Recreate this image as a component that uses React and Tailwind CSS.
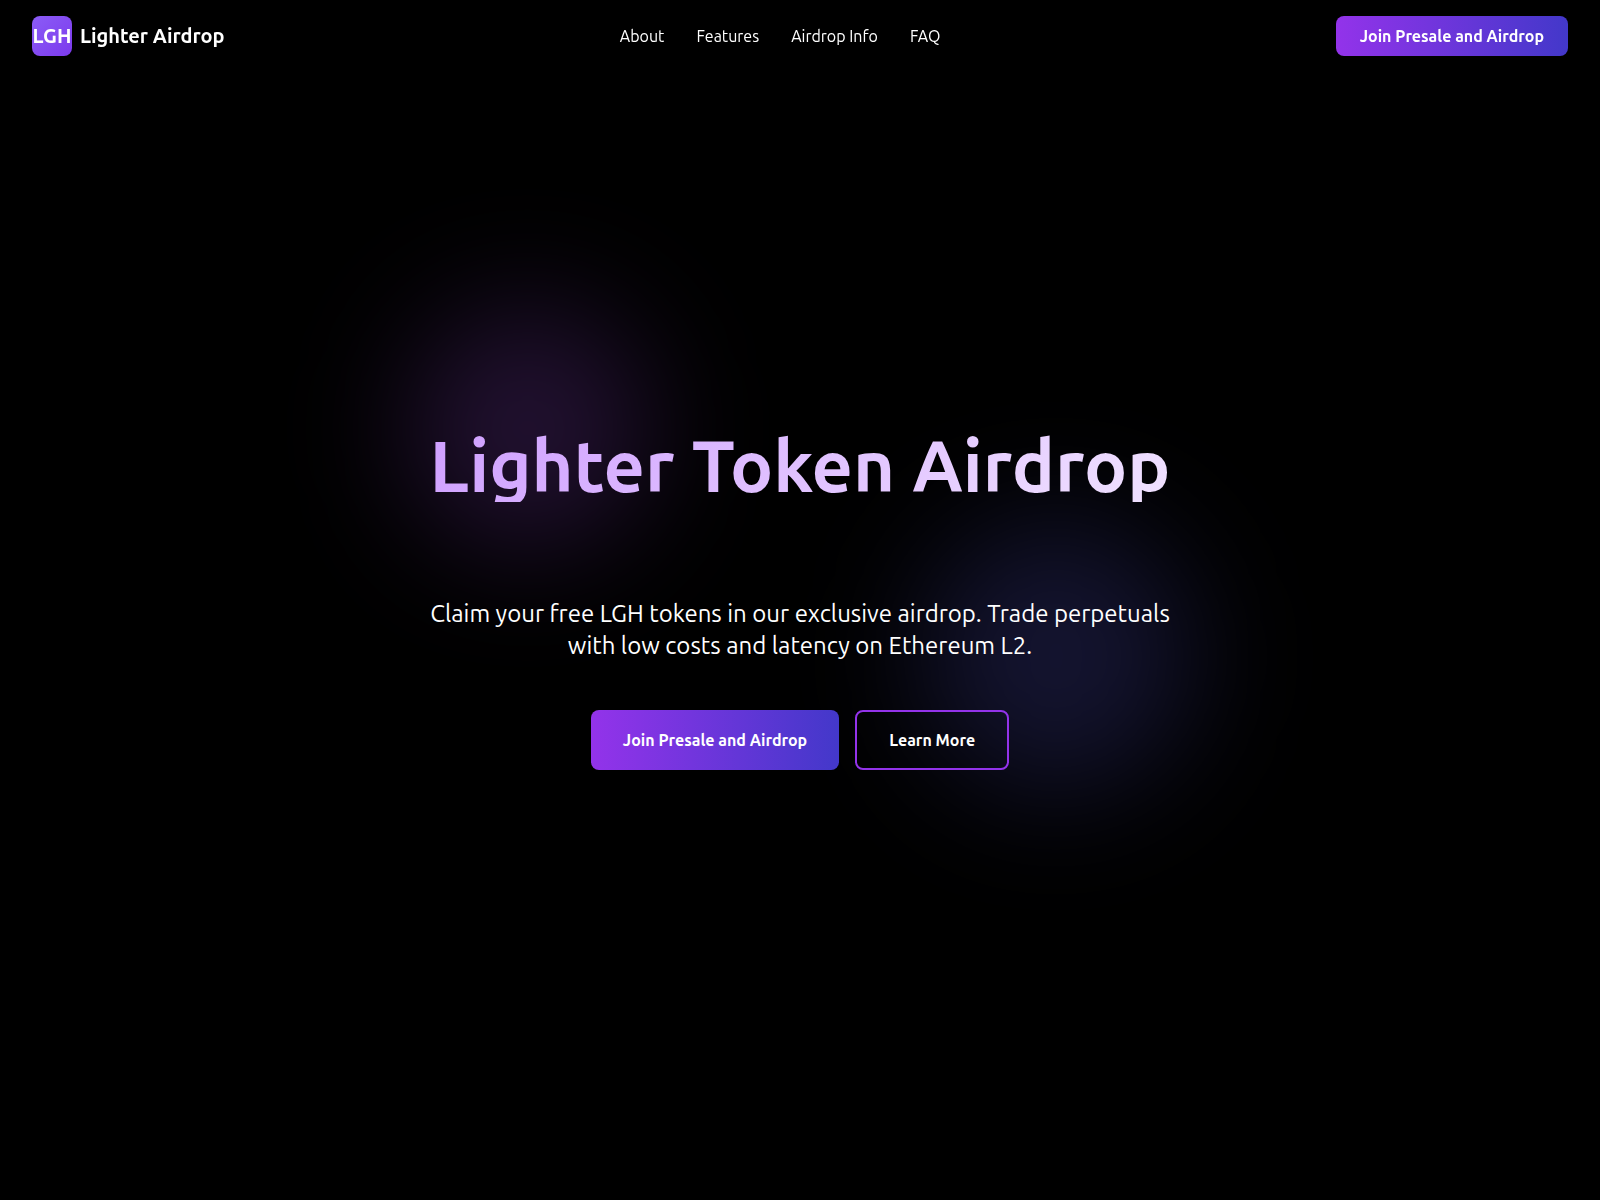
const navLinks = [
  { label: "About", href: "#about" },
  { label: "Features", href: "#features" },
  { label: "Airdrop Info", href: "#airdrop-info" },
  { label: "FAQ", href: "#faq" },
];

function Header() {
  return (
    <header className="fixed inset-x-0 top-0 z-10 flex items-center justify-between px-8 py-4">
      <a href="#top" className="flex items-center gap-2 text-xl font-bold">
        <span className="flex h-10 w-10 items-center justify-center rounded-lg bg-linear-135/srgb from-[#8b5cf6] to-[#7c3aed]">
          LGH
        </span>
        <span>Lighter Airdrop</span>
      </a>

      <nav className="flex items-center gap-8">
        {navLinks.map((link) => (
          <a key={link.href} href={link.href} className="hover:text-[#d8b4fe]">
            {link.label}
          </a>
        ))}
      </nav>

      <button
        type="button"
        className="rounded-lg bg-linear-to-r/srgb from-[#9333ea] to-[#4338ca] px-6 py-2 font-semibold"
      >
        Join Presale and Airdrop
      </button>
    </header>
  );
}

function Hero() {
  return (
    <section
      id="top"
      className="relative flex min-h-screen flex-col items-center justify-center overflow-hidden px-4 text-center"
    >
      {/* background glows */}
      <div className="absolute top-1/4 left-1/4 h-64 w-64 scale-95 rounded-full bg-[#a855f7]/20 blur-3xl" />
      <div className="absolute right-1/4 bottom-1/3 h-72 w-72 scale-95 rounded-full bg-[#6366f1]/20 blur-3xl" />

      <div className="relative flex flex-col items-center">
        <h1 className="bg-linear-135/srgb from-[#cf9fff] to-[#f0e2ff] bg-clip-text text-7xl leading-none font-bold text-transparent">
          Lighter Token Airdrop
        </h1>
        <p className="mt-24 max-w-3xl text-2xl">
          Claim your free LGH tokens in our exclusive airdrop. Trade perpetuals with low costs and latency on Ethereum L2.
        </p>
        <div className="mt-12 flex gap-4 font-semibold">
          <button
            type="button"
            className="rounded-lg bg-linear-to-r/srgb from-[#9333ea] to-[#4338ca] px-8 py-4"
          >
            Join Presale and Airdrop
          </button>
          <a href="#about" className="rounded-lg border-2 border-[#9333ea] px-8 py-4">
            Learn More
          </a>
        </div>
      </div>
    </section>
  );
}

export default function App() {
  return (
    <div className="min-h-screen bg-black font-['Ubuntu',sans-serif] text-base text-white">
      <Header />
      <Hero />
    </div>
  );
}
